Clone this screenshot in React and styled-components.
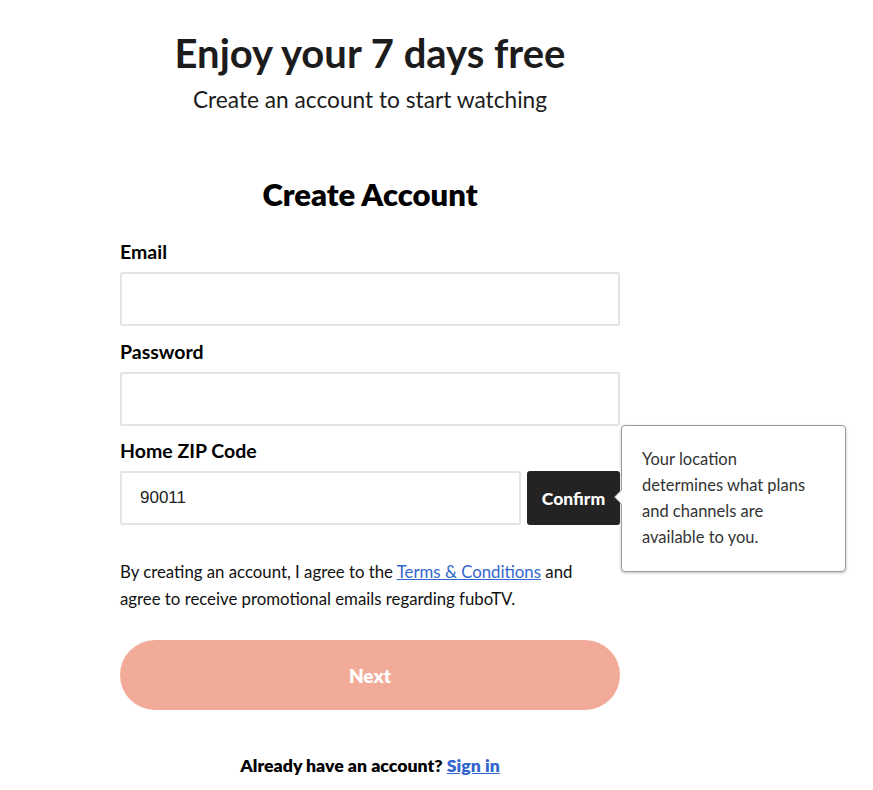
import React from "react";
import styled, { createGlobalStyle } from "styled-components";

const Global = createGlobalStyle`
  html, body { margin: 0; padding: 0; background: #fff; }
  body { font-family: "Lato", "Noto Sans", sans-serif; color: #111; }
  * { box-sizing: border-box; }
`;

const Page = styled.div`
  padding: 30px 0 0 120px;
  width: 873px;
  height: 790px;
  overflow: hidden;
`;

const Column = styled.div`
  width: 500px;
  display: flex;
  flex-direction: column;
`;

const Hero = styled.h1`
  margin: 0;
  text-align: center;
  font-size: 40px;
  font-weight: 700;
  line-height: 46px;
  color: #1c1c1c;
`;

const Sub = styled.p`
  margin: 10px 0 0;
  text-align: center;
  font-size: 22.7px;
  line-height: 28px;
  font-weight: 400;
  color: #1c1c1c;
`;

const FormTitle = styled.h2`
  margin: 62px 0 0;
  text-align: center;
  font-size: 31px;
  line-height: 36px;
  font-weight: 800;
  color: #000;
`;

const Label = styled.label`
  display: block;
  margin-top: ${(p) => p.$top}px;
  font-size: 19.5px;
  line-height: 22px;
  font-weight: 700;
  color: #000;
`;

const Input = styled.input`
  display: block;
  margin-top: 9px;
  width: ${(p) => p.$w || 500}px;
  height: 54px;
  border: 2px solid #e4e4e4;
  border-radius: 2px;
  padding: 0 18px;
  font-family: "Liberation Sans", Arial, sans-serif;
  font-size: 17px;
  color: #222;
  outline: none;
  background: #fff;
`;

const ZipRow = styled.div`
  display: flex;
  align-items: center;
  gap: 6px;
  margin-top: 9px;
  position: relative;
  & > input { margin-top: 0; }
`;

const Confirm = styled.button`
  width: 93px;
  height: 54px;
  background: #232323;
  color: #fff;
  border: none;
  border-radius: 3px;
  font-family: "Lato", sans-serif;
  font-weight: 900;
  font-size: 17.5px;
  padding: 0;
`;

const Tooltip = styled.div`
  position: absolute;
  left: 501px;
  top: -46px;
  width: 225px;
  height: 147px;
  background: #fff;
  border: 1px solid #9a9a9a;
  border-radius: 4px;
  box-shadow: 0 1px 3px rgba(0, 0, 0, 0.25);
  padding: 20px 36px 0 20px;
  font-size: 16.5px;
  line-height: 26px;
  color: #333;

  &::before {
    content: "";
    position: absolute;
    left: -8px;
    top: 63px;
    width: 0;
    height: 0;
    border-top: 8px solid transparent;
    border-bottom: 8px solid transparent;
    border-right: 8px solid #9a9a9a;
  }
  &::after {
    content: "";
    position: absolute;
    left: -7px;
    top: 64px;
    width: 0;
    height: 0;
    border-top: 7px solid transparent;
    border-bottom: 7px solid transparent;
    border-right: 7px solid #fff;
  }
`;

const Terms = styled.p`
  margin: 33px 0 0;
  max-width: 482px;
  font-size: 16.8px;
  line-height: 27px;
  color: #111;
`;

const Link = styled.a`
  color: #3366cc;
  text-decoration: underline;
  font-weight: ${(p) => (p.$bold ? 800 : 400)};
`;

const NextButton = styled.button`
  margin-top: 28px;
  width: 500px;
  height: 70px;
  border: none;
  border-radius: 35px;
  background: #f2ab98;
  color: #fff;
  font-family: "Lato", sans-serif;
  font-weight: 800;
  font-size: 19px;
`;

const Footer = styled.p`
  margin: 45px 0 0;
  text-align: center;
  font-size: 17.7px;
  font-weight: 800;
  color: #000;
`;

export default function App() {
  return (
    <>
      <Global />
      <Page>
        <Column>
          <Hero>Enjoy your 7 days free</Hero>
          <Sub>Create an account to start watching</Sub>
          <FormTitle>Create Account</FormTitle>
          <Label $top={29}>Email</Label>
          <Input type="email" />
          <Label $top={15}>Password</Label>
          <Input type="password" />
          <Label $top={14}>Home ZIP Code</Label>
          <ZipRow>
            <Input $w={401} defaultValue="90011" />
            <Confirm>Confirm</Confirm>
            <Tooltip>
              Your location determines what plans and channels are available to you.
            </Tooltip>
          </ZipRow>
          <Terms>
            By creating an account, I agree to the <Link href="#">Terms &amp; Conditions</Link> and
            agree to receive promotional emails regarding fuboTV.
          </Terms>
          <NextButton>Next</NextButton>
          <Footer>
            Already have an account? <Link $bold href="#">Sign in</Link>
          </Footer>
        </Column>
      </Page>
    </>
  );
}
